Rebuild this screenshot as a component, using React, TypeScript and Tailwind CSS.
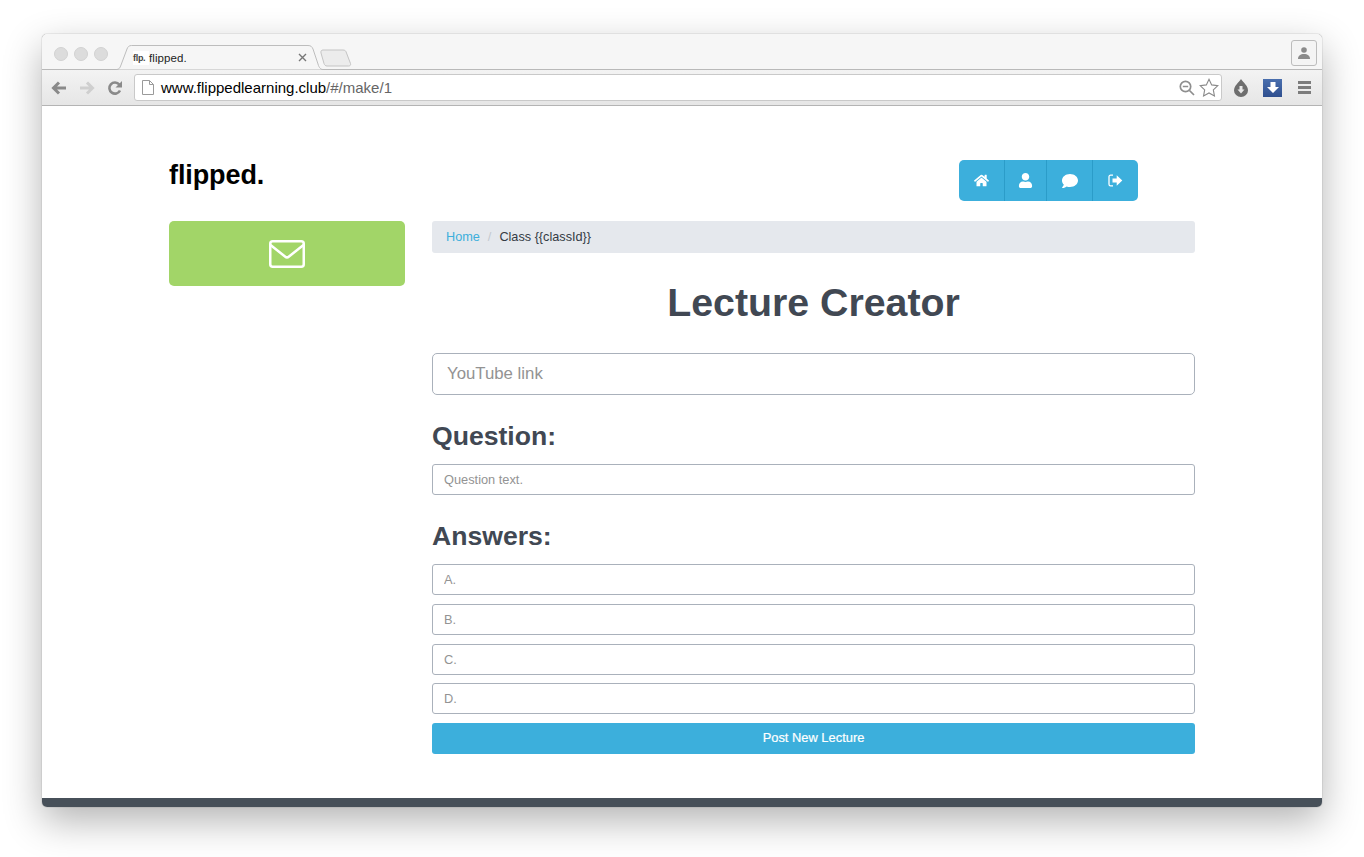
import React from 'react';
import { FaHome, FaUser, FaComment } from 'react-icons/fa';

const font = { fontFamily: '"Liberation Sans", Arial, sans-serif' };

const SignOutIcon = () => (
  <svg width="15" height="13" viewBox="0 0 15 13" fill="none">
    <path d="M5 1.2H2.6C1.7 1.2 1 1.9 1 2.8v7.4c0 .9.7 1.6 1.6 1.6H5" stroke="white" strokeWidth="1.3" />
    <path d="M4.5 4.4h4.2V1.3l5.6 5.2-5.6 5.2V8.6H4.5z" fill="white" />
  </svg>
);

const BrowserChrome = () => (
  <div className="shrink-0">
    {/* title bar with tabs */}
    <div className="relative h-[36px] bg-[#f6f6f6] rounded-t-[5px] border-b border-[#b9b9b9]">
      <div className="flex gap-[6px] pl-[12px] pt-[13px]">
        <span className="w-[14px] h-[14px] rounded-full bg-[#dcdcdc] border border-[#d2d2d2]" />
        <span className="w-[14px] h-[14px] rounded-full bg-[#dcdcdc] border border-[#d2d2d2]" />
        <span className="w-[14px] h-[14px] rounded-full bg-[#dcdcdc] border border-[#d2d2d2]" />
      </div>
      <svg className="absolute left-[74px] top-[11px]" width="240" height="26" viewBox="0 0 240 26" fill="none">
        <path d="M0.5 24.5C3 24.5 4 23 5 20L11 4C11.8 1.8 13 .5 15.5 .5H192C195 .5 196 1.8 197 4L202 19C203 23 205 24.500 207 24.500" fill="#f6f6f6" stroke="#bdbdbd" />
        <path d="M205 8C204.500 6 205.500 5 207 5H227C229 5 230 6 230.500 8L234.500 18.500C235 20 234 21 232.500 21H211C209.500 21 208.500 20 208 18.500Z" fill="#ececec" stroke="#c4c4c4" />
      </svg>
      <div className="absolute left-[91px] top-[17px] flex items-center leading-[14px] text-[#222]">
        <span className="w-[16px] bg-white font-bold text-[9px] tracking-[-0.3px] text-[#444] whitespace-nowrap">flp.</span>
        <span className="text-[11.5px] tracking-[0.1px]">flipped.</span>
      </div>
      <svg className="absolute left-[256px] top-[19px]" width="9" height="9" viewBox="0 0 9 9">
        <path d="M1 1l7 7M8 1L1 8" stroke="#777" strokeWidth="1.4" />
      </svg>
      <div className="absolute right-[5px] top-[6px] w-[26px] h-[26px] flex items-center justify-center rounded-[3px] border border-[#bcbcbc] bg-[#f4f4f4]">
        <svg width="14" height="12" viewBox="0 0 14 12" fill="#8a8a8a">
          <circle cx="7" cy="3" r="2.8" />
          <path d="M1 12c0-3.5 2.5-5 6-5s6 1.500 6 5z" />
        </svg>
      </div>
    </div>
    {/* toolbar */}
    <div className="h-[36px] flex items-center bg-gradient-to-b from-[#f3f3f3] to-[#e6e6e6] border-b border-[#b4b4b4]">
      <svg className="ml-[9px]" width="16" height="14" viewBox="0 0 16 14" fill="none">
        <path d="M15 7H3M8 1.500 2.500 7 8 12.500" stroke="#8a8a8a" strokeWidth="3" />
      </svg>
      <svg className="ml-[12px]" width="16" height="14" viewBox="0 0 16 14" fill="none">
        <path d="M1 7h12M8 1.500 13.500 7 8 12.500" stroke="#cfcfcf" strokeWidth="3" />
      </svg>
      <svg className="ml-[12px]" width="16" height="16" viewBox="0 0 16 16" fill="none">
        <path d="M13 10.500A5.600 5.600 0 1 1 12.300 4.500" stroke="#8a8a8a" strokeWidth="2.600" />
        <path d="M15 1v6.500H8.500z" fill="#8a8a8a" />
      </svg>
      <div className="ml-[11px] w-[1088px] h-[27px] flex items-center bg-white rounded-[3px] border border-[#c9c9c9]">
        <svg className="ml-[7px]" width="12" height="15" viewBox="0 0 12 15" fill="none">
          <path d="M.5.500h7l4 4v10H.5z" fill="#fff" stroke="#9a9a9a" />
          <path d="M7.500.500v4h4" stroke="#9a9a9a" />
        </svg>
        <span className="ml-[7px] pt-[1px] text-[15px] text-black whitespace-nowrap">
          www.flippedlearning.club<span className="text-[#666]">/#/make/1</span>
        </span>
        <svg className="ml-auto" width="16" height="16" viewBox="0 0 16 16" fill="none">
          <circle cx="6.500" cy="6.500" r="5.200" stroke="#8e8e8e" strokeWidth="1.700" />
          <path d="M3.800 6.500h5.400M10.500 10.500l4.500 4.500" stroke="#8e8e8e" strokeWidth="1.700" />
        </svg>
        <svg className="ml-[4px] mr-[2px]" width="20" height="20" viewBox="0 0 18 18" fill="#fff">
          <path d="M9 1.200l2.400 5 5.500.700-4 3.800 1 5.500L9 13.500l-4.900 2.700 1-5.500-4-3.800 5.500-.700z" stroke="#8a8a8a" />
        </svg>
      </div>
      <svg className="ml-[12px]" width="14" height="18" viewBox="0 0 14 18">
        <path d="M7 0C9 3.500 14 6.500 14 11.500A7 6.500 0 0 1 0 11.500C0 6.500 5 3.500 7 0Z" fill="#6e6e6e" />
        <path d="M5.500 7h3v3.500h2L7 14.500 3.500 10.500h2z" fill="#e8e8e8" />
      </svg>
      <div className="ml-[15px] w-[19px] h-[18px] flex items-center justify-center bg-gradient-to-b from-[#4a6fae] to-[#2f4f8f]">
        <svg width="12" height="11" viewBox="0 0 12 11">
          <path d="M3.500 0h5v5H12L6 11 0 5h3.500z" fill="#fff" />
        </svg>
      </div>
      <div className="ml-[16px] flex flex-col gap-[2px]">
        <span className="w-[13px] h-[3px] bg-[#7c7c7c]" />
        <span className="w-[13px] h-[3px] bg-[#7c7c7c]" />
        <span className="w-[13px] h-[3px] bg-[#7c7c7c]" />
      </div>
    </div>
  </div>
);

const SmallInput = ({ placeholder }: { placeholder: string }) => (
  <input
    placeholder={placeholder}
    className="block w-full h-[31px] px-[11px] bg-white text-[12.8px] rounded-[3px] border border-[#aab1bb] placeholder:text-[#939393] outline-none"
  />
);

export default function App() {
  return (
    <div className="w-[1364px] h-[857px] bg-white overflow-hidden pt-[34px] pl-[42px]" style={font}>
      <div className="w-[1280px] h-[773px] flex flex-col bg-white rounded-[5px] overflow-hidden shadow-[0_14px_38px_rgba(0,0,0,0.3),0_0_1px_rgba(0,0,0,0.6)]">
        <BrowserChrome />

        <div className="flex-1 flex gap-[27px] pl-[127px] pr-[127px] text-[#343b44]">
          {/* left column */}
          <div className="w-[236px] shrink-0">
            <div className="h-[115px] pt-[53px] text-[27px] leading-[32px] font-bold text-black tracking-[-0.1px]">flipped.</div>
            <div className="h-[65px] flex items-center justify-center bg-[#a2d568] rounded-[5px]">
              <svg width="36" height="28" viewBox="0 0 36 28" fill="none" stroke="white" strokeWidth="2.500">
                <rect x="1.250" y="1.250" width="33.500" height="25.500" rx="2.500" />
                <path d="M1.500 5l14.500 11.500c1.200 1 2.800 1 4 0L34.500 5" />
              </svg>
            </div>
          </div>

          {/* main column */}
          <div className="flex-1 min-w-0">
            <div className="h-[115px] pt-[54px] pl-[527px]">
              <div className="w-[179px] h-[41px] flex bg-[#3cafdc] rounded-[5px] text-white divide-x divide-[#2b9cc9]">
                <div className="w-[46px] flex items-center justify-center"><FaHome size={15} /></div>
                <div className="w-[42px] flex items-center justify-center"><FaUser size={15} /></div>
                <div className="w-[46px] flex items-center justify-center"><FaComment size={16} /></div>
                <div className="flex-1 flex items-center justify-center"><SignOutIcon /></div>
              </div>
            </div>

            <div className="h-[32px] flex items-center px-[14px] pt-[2px] bg-[#e5e8ed] rounded-[3px] text-[12.7px]">
              <span className="text-[#3cafdc]">Home</span>
              <span className="mx-[8px] text-[#c4c9cf]">/</span>
              <span className="text-[#343b44]">Class {'{{classId}}'}</span>
            </div>

            <h1 className="mt-[26px] text-center text-[39.3px] leading-[46px] font-bold text-[#414853]">Lecture Creator</h1>

            <input
              placeholder="YouTube link"
              className="block w-full h-[42px] mt-[28px] pl-[14px] pr-[15px] bg-white text-[16.8px] rounded-[5px] border border-[#aab1bb] placeholder:text-[#939393] outline-none"
            />

            <h2 className="mt-[26px] text-[26.600px] leading-[31px] font-bold text-[#414853]">Question:</h2>
            <div className="mt-[12px]">
              <SmallInput placeholder="Question text." />
            </div>

            <h2 className="mt-[26px] text-[26.600px] leading-[31px] font-bold text-[#414853]">Answers:</h2>
            <div className="mt-[12px] flex flex-col gap-[8.75px]">
              <SmallInput placeholder="A." />
              <SmallInput placeholder="B." />
              <SmallInput placeholder="C." />
              <SmallInput placeholder="D." />
              <div className="h-[31px] flex items-center justify-center pb-[1px] bg-[#3cafdc] rounded-[3px] text-white text-[12.9px] [-webkit-text-stroke:0.2px_white]">Post New Lecture</div>
            </div>
          </div>
        </div>

        <div className="h-[9px] shrink-0 bg-[#475059]" />
      </div>
    </div>
  );
}
